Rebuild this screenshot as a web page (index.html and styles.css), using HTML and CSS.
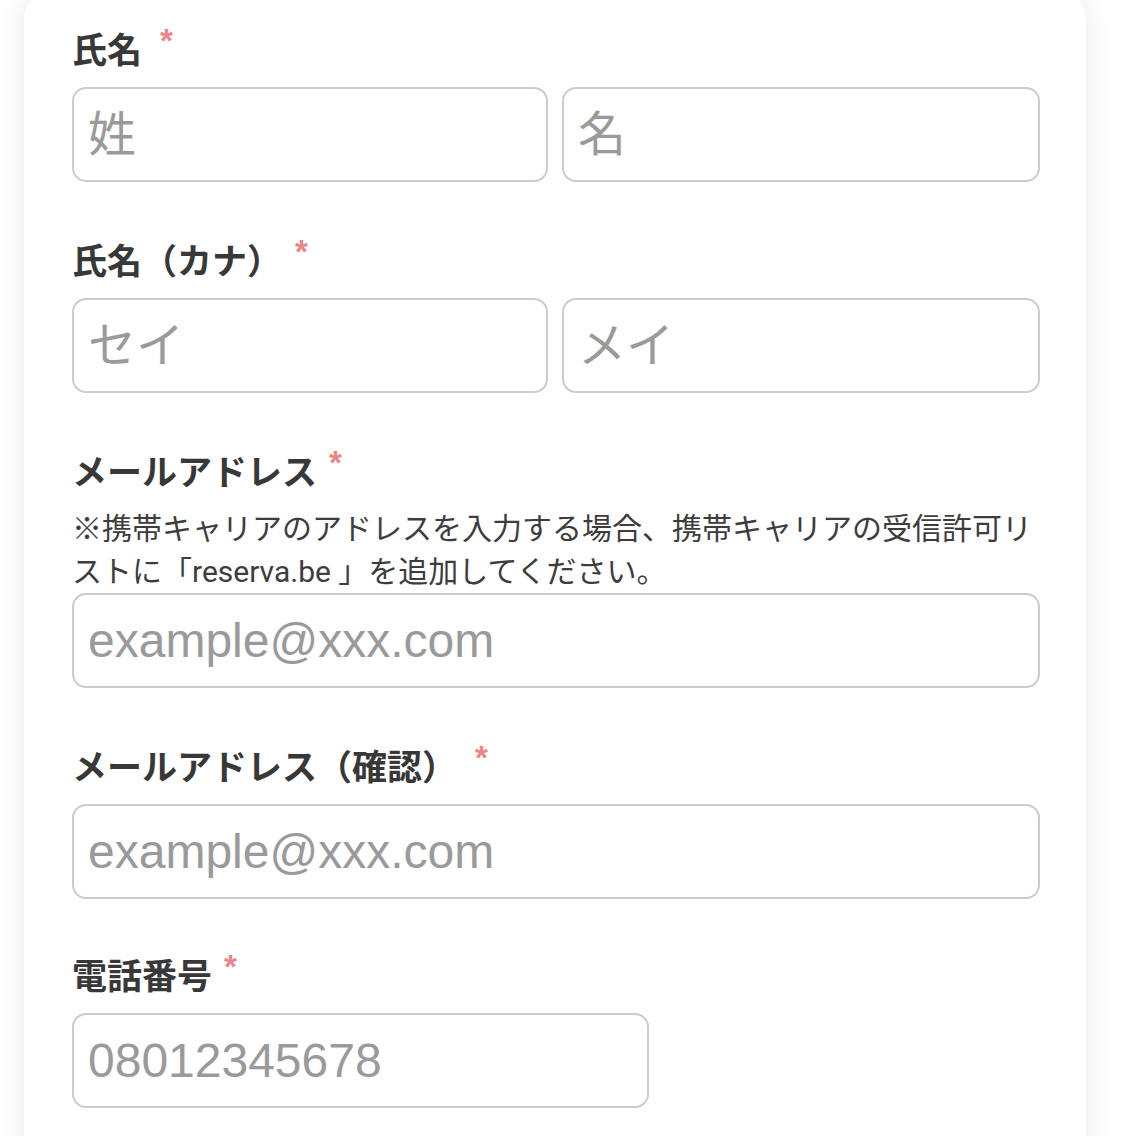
FILE: index.html
```html
<!DOCTYPE html>
<html lang="ja">
<head>
<meta charset="utf-8">
<title>フォーム</title>
<link rel="stylesheet" href="styles.css">
</head>
<body>
<div class="card">
  <div class="field">
    <div class="label">氏名<span class="req req-wide">*</span></div>
    <div class="pair">
      <input class="input" type="text" placeholder="姓">
      <input class="input" type="text" placeholder="名">
    </div>
  </div>
  <div class="field">
    <div class="label">氏名（カナ）<span class="req req-mid">*</span></div>
    <div class="pair">
      <input class="input" type="text" placeholder="セイ">
      <input class="input" type="text" placeholder="メイ">
    </div>
  </div>
  <div class="field">
    <div class="label">メールアドレス<span class="req">*</span></div>
    <p class="note">※携帯キャリアのアドレスを入力する場合、携帯キャリアの受信許可リストに「reserva.be 」を追加してください。</p>
    <input class="input" type="email" placeholder="example@xxx.com">
  </div>
  <div class="field field-tight">
    <div class="label">メールアドレス（確認）<span class="req req-wide">*</span></div>
    <input class="input" type="email" placeholder="example@xxx.com">
  </div>
  <div class="field">
    <div class="label">電話番号<span class="req">*</span></div>
    <input class="input input-short" type="tel" placeholder="08012345678">
  </div>
</div>
</body>
</html>
```
FILE: styles.css
```css
html, body {
  margin: 0;
  padding: 0;
  background: #ffffff;
}

body {
  font-family: "Noto Sans CJK JP", sans-serif;
  color: #3d3d3d;
  overflow: hidden;
}

.card {
  box-sizing: border-box;
  width: 1062px;
  margin: -12px 0 0 24px;
  padding: 35px 46px 40px 48px;
  background: #ffffff;
  border-radius: 32px;
  box-shadow: 0 0 28px rgba(0, 0, 0, 0.09);
  min-height: 1200px;
}

.field {
  margin-bottom: 52px;
}

.field-tight {
  margin-bottom: 50px;
}

.label {
  font-family: "Noto Sans CJK JP", sans-serif;
  font-weight: 700;
  font-size: 35px;
  line-height: 50px;
  height: 50px;
  margin-bottom: 14px;
  color: #383838;
  white-space: nowrap;
}

.req {
  position: relative;
  top: -11px;
  font-family: "Liberation Sans", Arial, sans-serif;
  font-weight: 700;
  font-size: 33px;
  color: #ec858a;
  margin-left: 12px;
}

.req-wide {
  margin-left: 18px;
}

.req-mid {
  margin-left: 13px;
}

.note {
  margin: -2px 0 0 0;
  font-family: "Roboto", "Noto Sans CJK JP", sans-serif;
  font-size: 30px;
  line-height: 43px;
  color: #3d3d3d;
}

.pair {
  display: grid;
  grid-template-columns: 476px 478px;
  column-gap: 14px;
}

.input {
  display: block;
  box-sizing: border-box;
  width: 100%;
  height: 95px;
  margin: 0;
  padding: 0 14px;
  border: 2px solid #cccccc;
  border-radius: 14px;
  background: #ffffff;
  font-family: "Liberation Sans", Arial, "Noto Sans CJK JP", sans-serif;
  font-size: 48px;
  color: #333333;
  outline: none;
}

.input::placeholder {
  color: #9a9a9a;
  opacity: 1;
}

.input-short {
  width: 577px;
}
```
